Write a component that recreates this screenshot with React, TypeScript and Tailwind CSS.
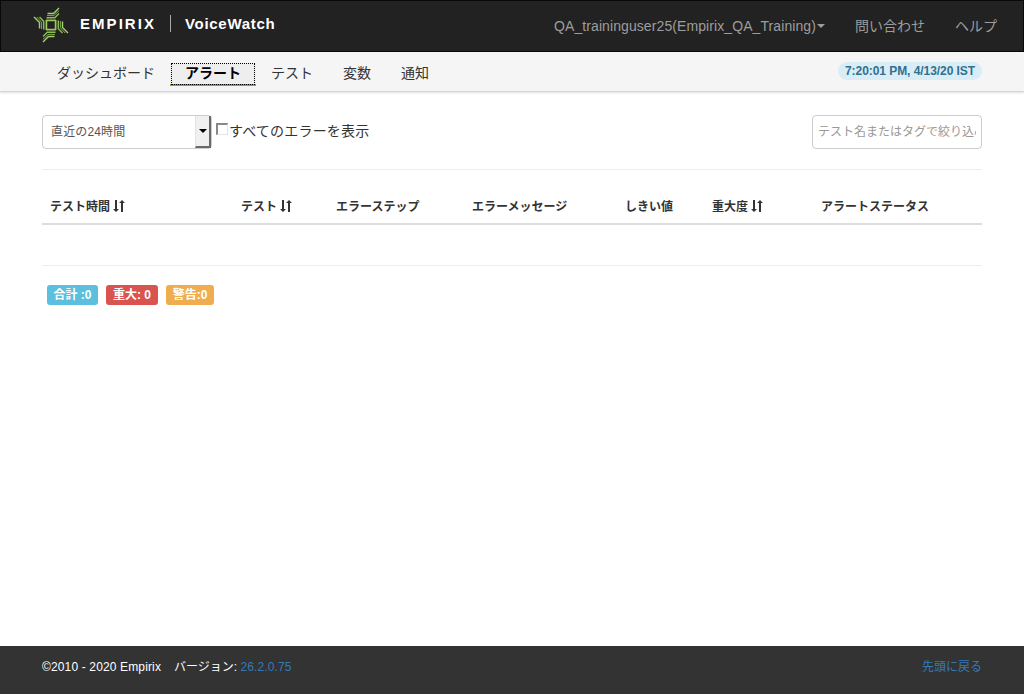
import type { ReactNode } from "react";

const FONT = "font-['Liberation_Sans','Noto_Sans_CJK_JP',sans-serif]";

function Logo() {
  return (
    <svg width="36" height="36" viewBox="-18 -18 36 36" fill="none" stroke="#9ccb5b" strokeWidth="1.4" className="-mt-[2px] shrink-0">
      {[0, 90, 180, 270].map((angle) => (
        <g key={angle} transform={`rotate(${angle})`}>
          <path d="M-5 -4.6H5" strokeWidth="1.7" />
          <path d="M-4.5 -7.3H3.8L8 -11.5" stroke="#8abf50" />
          <path d="M-4 -9.4H2.8L8 -14.2" stroke="#7fae4d" strokeWidth="1" />
          <path d="M-3.5 -11.5H2.5L8 -17" stroke="#a6cf72" />
        </g>
      ))}
    </svg>
  );
}

function SortIcon() {
  return (
    <svg width="12" height="12" viewBox="0 0 12 12" fill="#333" className="-mt-0.5 ml-[3px] shrink-0">
      <path d="M2 0H4V9H6L3 12L0 9H2Z" />
      <path d="M8 12H10V3H12L9 0L6 3H8Z" />
    </svg>
  );
}

function Header({ width, sort, children }: { width: string; sort?: boolean; children: ReactNode }) {
  return (
    <th className={`${width} p-0 text-left font-bold`}>
      <span className="flex items-center pl-2 whitespace-nowrap">
        {children}
        {sort && <SortIcon />}
      </span>
    </th>
  );
}

export default function App() {
  return (
    <div className={`${FONT} flex h-[694px] w-[1024px] flex-col overflow-hidden bg-white text-sm leading-5 text-[#333]`}>
      <header className="flex h-[52px] shrink-0 items-center border border-[#080808] bg-[#222] pl-8">
        <Logo />
        <span className="-mt-[5px] ml-[11px] w-[76px] text-[15px] font-bold tracking-[2.05px] whitespace-nowrap text-white">EMPIRIX</span>
        <span className="-mt-[6px] ml-[14px] h-[17px] w-px bg-[#aaa]" />
        <span className="-mt-[5px] ml-[14px] text-[15px] font-bold tracking-[0.7px] text-white">VoiceWatch</span>
        <nav className="mr-[26px] ml-auto flex items-center gap-[30px] text-[#9d9d9d]">
          <a className="flex items-center tracking-[0.09px]">
            QA_traininguser25(Empirix_QA_Training)
            <span className="ml-px border-x-4 border-t-4 border-x-transparent border-t-[#9d9d9d]" />
          </a>
          <a>問い合わせ</a>
          <a>ヘルプ</a>
        </nav>
      </header>

      <div className="flex h-[40px] shrink-0 items-start border-b border-[#d5d5d5] bg-[#f5f5f5] pt-[10px] pr-[42px] pl-[57px] shadow-[0_1px_2px_rgba(0,0,0,0.12)]">
        <nav className="flex items-start">
          <a className="mt-px w-[98px] whitespace-nowrap">ダッシュボード</a>
          <a className="mt-px ml-[15px] h-[23px] w-[86px] border-b-2 border-[#80b000] bg-[#eee] px-px">
            <span className="block h-[22px] w-[84px] border border-dotted border-black text-center leading-[19px] font-bold text-black">アラート</span>
          </a>
          <a className="mt-px ml-[15px]">テスト</a>
          <a className="mt-px ml-[30px]">変数</a>
          <a className="mt-px ml-[30px]">通知</a>
        </nav>
        <span className="ml-auto h-[18px] w-[144px] rounded-full bg-[#d9edf7] text-center text-xs leading-[18px] font-bold tracking-[-0.06px] whitespace-nowrap text-[#31708f]">7:20:01 PM, 4/13/20 IST</span>
      </div>

      <main className="mx-[42px] flex-1">
        <div className="mt-[23px] flex h-[34px]">
          <button className="flex h-[34px] w-[170px] items-center rounded border border-[#ccc] pl-2 text-left text-xs text-[#555]">
            <span className="flex-1 tracking-[0.15px]">直近の24時間</span>
            <span className="flex h-[32px] w-4 items-center justify-center border-r-2 border-b-2 border-l border-r-[#696969] border-b-[#696969] border-l-[#e3e3e3] bg-[#f0f0f0]">
              <span className="border-x-4 border-t-4 border-x-transparent border-t-black" />
            </span>
          </button>
          <label className="flex items-start pt-[6px] pl-1 tracking-[0.2px]">
            <span className="mt-[2px] h-3 w-3 border-t-2 border-r border-b border-l-2 border-t-[#888] border-r-[#e3e3e3] border-b-[#e3e3e3] border-l-[#888] bg-white" />
            <span className="ml-px">すべてのエラーを表示</span>
          </label>
          <div className="ml-auto flex h-[34px] w-[170px] items-center rounded border border-[#ccc] px-[5px] text-xs text-[#999]">
            <span className="overflow-hidden whitespace-nowrap">テスト名またはタグで絞り込み</span>
          </div>
        </div>

        <div className="mt-5 border-t border-[#eee]" />

        <table className="mt-5 w-full table-fixed border-collapse text-xs">
          <thead>
            <tr className="h-[34px] border-b-2 border-[#ddd]">
              <Header width="w-[191px]" sort>テスト時間</Header>
              <Header width="w-[95px]" sort>テスト</Header>
              <Header width="w-[136px]">エラーステップ</Header>
              <Header width="w-[153px]">エラーメッセージ</Header>
              <Header width="w-[87px]">しきい値</Header>
              <Header width="w-[109px]" sort>重大度</Header>
              <Header width="w-[169px]">アラートステータス</Header>
            </tr>
          </thead>
        </table>

        <div className="mt-10 border-t border-[#eee]" />

        <div className="mt-[19px] flex gap-2 pl-[5px] text-center text-xs leading-5 font-bold text-white">
          <span className="h-5 w-[51px] rounded-[3px] bg-[#5bc0de]">合計 :0</span>
          <span className="h-5 w-[52px] rounded-[3px] bg-[#d9534f]">重大: 0</span>
          <span className="h-5 w-[48px] rounded-[3px] bg-[#f0ad4e]">警告:0</span>
        </div>
      </main>

      <footer className="flex h-12 shrink-0 items-start bg-[#333] px-[42px] pt-[11px] text-xs leading-5 text-white">
        <span className="tracking-[0.14px]">©2010 - 2020 Empirix</span>
        <span className="ml-[13px]">バージョン: <a className="tracking-[0.1px] text-[#337ab7]">26.2.0.75</a></span>
        <a className="ml-auto text-[#337ab7]">先頭に戻る</a>
      </footer>
    </div>
  );
}
